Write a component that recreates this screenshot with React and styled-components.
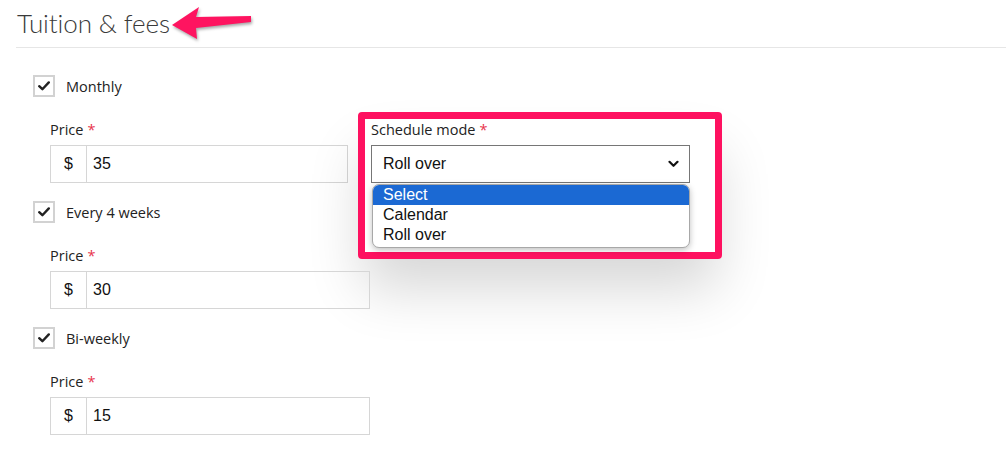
import React from "react";
import styled, { createGlobalStyle } from "styled-components";

const Global = createGlobalStyle`
  html, body { margin: 0; padding: 0; background: #fff; }
  body { font-family: "Open Sans", "Noto Sans", sans-serif; color: #222; }
  * { box-sizing: border-box; }
`;

const Page = styled.div`
  width: 1006px;
  height: 469px;
  overflow: hidden;
  position: relative;
`;

const Header = styled.div`
  position: relative;
  margin-left: 16px;
  height: 48px;
  padding-top: 8px;
  border-bottom: 1px solid #e6e6e6;
`;

const Title = styled.h2`
  margin: 0 0 0 1px;
  font-family: "Lato", sans-serif;
  font-weight: 300;
  font-size: 26px;
  line-height: 1.2;
  color: #3a3a3a;
  letter-spacing: -0.1px;
`;

const Arrow = styled.svg`
  position: absolute;
  left: 134px;
  top: 0;
  filter: drop-shadow(1px 2px 1.5px rgba(0, 0, 0, 0.35));
`;

const Content = styled.div`
  padding: 27px 0 0 33px;
`;

const Section = styled.div`
  padding-bottom: 17px;
  & + & { margin-top: 1px; }
`;

const CheckRow = styled.label`
  display: flex;
  align-items: center;
  gap: 11px;
  height: 22px;
  font-size: 14.5px;
  color: #222;
`;

const Box = styled.span`
  width: 22px;
  height: 22px;
  border: 2px solid #d2d2d2;
  display: flex;
  align-items: center;
  justify-content: center;
  background: #fff;
`;

const FieldRow = styled.div`
  display: grid;
  grid-template-columns: ${(p) => p.$cols || "320px"};
  column-gap: 23px;
  margin: 23px 0 0 17px;
`;

const Field = styled.div`
  position: relative;
  display: flex;
  flex-direction: column;
  gap: 5px;
`;

const Label = styled.div`
  font-size: 14.5px;
  line-height: 20px;
  color: #222;
  & > span { color: #e8344d; margin-left: 4px; }
`;

const InputGroup = styled.div`
  display: flex;
  height: 38px;
  border: 1px solid #d6d6d6;
  font-family: "Liberation Sans", Arial, sans-serif;
  font-size: 16px;
  color: #111;
`;

const Addon = styled.div`
  width: 36px;
  border-right: 1px solid #d6d6d6;
  display: flex;
  align-items: center;
  justify-content: center;
`;

const Value = styled.div`
  flex: 1;
  display: flex;
  align-items: center;
  padding-left: 6px;
`;

const Select = styled.div`
  height: 38px;
  border: 1px solid #767676;
  display: flex;
  align-items: center;
  justify-content: space-between;
  padding: 0 10px 0 11px;
  font-family: "Liberation Sans", Arial, sans-serif;
  font-size: 16px;
  color: #111;
  background: #fff;
`;

const Frame = styled.div`
  position: absolute;
  left: -13px;
  top: -8px;
  right: -32px;
  bottom: -76px;
  border: 7px solid #fe1160;
  border-radius: 4px;
  box-shadow: 0 35px 55px -5px rgba(0, 0, 0, 0.16);
  pointer-events: none;
`;

const Dropdown = styled.ul`
  position: absolute;
  left: 1px;
  right: 0;
  top: 64px;
  margin: 0;
  padding: 0 0 2px;
  list-style: none;
  background: #fff;
  border: 1px solid #a8a8a8;
  border-radius: 7px;
  overflow: hidden;
  box-shadow: 0 2px 6px rgba(0, 0, 0, 0.25);
  font-family: "Liberation Sans", Arial, sans-serif;
  font-size: 16px;
  z-index: 2;
`;

const Option = styled.li`
  height: 20px;
  line-height: 19px;
  padding-left: 10px;
  background: ${(p) => (p.$active ? "#1b69d3" : "transparent")};
  color: ${(p) => (p.$active ? "#fff" : "#111")};
`;

const Check = () => (
  <Box>
    <svg width="12" height="10" viewBox="0 0 12 10">
      <path d="M1.2 5.2 L4.4 8.2 L10.8 1.4" fill="none" stroke="#222" strokeWidth="2.4" strokeLinecap="round" strokeLinejoin="round" />
    </svg>
  </Box>
);

const Chevron = () => (
  <svg width="11" height="8" viewBox="0 0 11 8">
    <path d="M1.5 1.8 L5.5 5.8 L9.5 1.8" fill="none" stroke="#111" strokeWidth="2.2" strokeLinecap="round" strokeLinejoin="round" />
  </svg>
);

const PriceField = ({ value }) => (
  <Field>
    <Label>Price<span>*</span></Label>
    <InputGroup>
      <Addon>$</Addon>
      <Value>{value}</Value>
    </InputGroup>
  </Field>
);

export default function App() {
  return (
    <Page>
      <Global />
      <Header>
        <Title>Tuition &amp; fees</Title>
        <Arrow width="110" height="45" viewBox="150 0 110 45">
          <polygon points="172,25 199,7 196,17 251,16 251,22 196,28 197,39" fill="#fe1460" />
        </Arrow>
      </Header>
      <Content>
        <Section>
          <CheckRow><Check />Monthly</CheckRow>
          <FieldRow $cols="298px 319px">
            <PriceField value="35" />
            <Field>
              <Label>Schedule mode<span>*</span></Label>
              <Select>
                <span>Roll over</span>
                <Chevron />
              </Select>
              <Dropdown>
                <Option $active>Select</Option>
                <Option>Calendar</Option>
                <Option>Roll over</Option>
              </Dropdown>
              <Frame />
            </Field>
          </FieldRow>
        </Section>
        <Section>
          <CheckRow><Check />Every 4 weeks</CheckRow>
          <FieldRow>
            <PriceField value="30" />
          </FieldRow>
        </Section>
        <Section>
          <CheckRow><Check />Bi-weekly</CheckRow>
          <FieldRow>
            <PriceField value="15" />
          </FieldRow>
        </Section>
      </Content>
    </Page>
  );
}
